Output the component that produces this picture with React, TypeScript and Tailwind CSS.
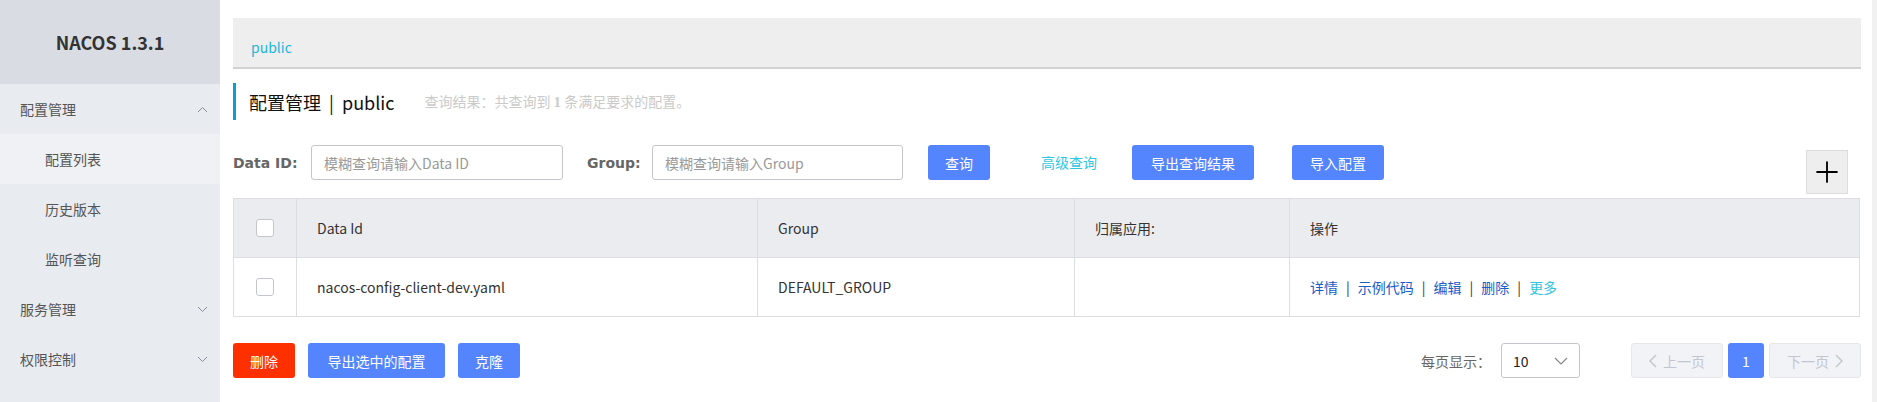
import { Plus } from 'lucide-react';

const MENU = [
  { label: '配置管理', level: 0, open: true },
  { label: '配置列表', level: 1, active: true },
  { label: '历史版本', level: 1 },
  { label: '监听查询', level: 1 },
  { label: '服务管理', level: 0, open: false },
  { label: '权限控制', level: 0, open: false },
];

const ACTIONS = ['详情', '示例代码', '编辑', '删除'];

function Chevron({ up }: { up?: boolean }) {
  return (
    <svg width="11" height="7" viewBox="0 0 11 7" className="text-[#8a8e99]">
      <polyline
        points={up ? '1,6 5.5,1.5 10,6' : '1,1 5.5,5.5 10,1'}
        fill="none"
        stroke="currentColor"
        strokeWidth="1"
      />
    </svg>
  );
}

function Checkbox() {
  return <span className="block h-[18px] w-[18px] rounded-[3px] border border-[#c4c6cf] bg-white" />;
}

function Sidebar() {
  return (
    <aside className="w-[220px] shrink-0 bg-[#e8ebf0]">
      <div className="flex h-[84px] items-center justify-center bg-[#d9dde3] text-[18px] font-bold text-[#333]">
        NACOS 1.3.1
      </div>
      {MENU.map((m) => (
        <div
          key={m.label}
          className={`flex h-[50px] items-center justify-between pr-[12px] text-[14px] text-[#555] ${
            m.level === 1 ? 'pl-[45px]' : 'pl-[20px]'
          } ${m.active ? 'bg-[#eff1f4]' : ''}`}
        >
          <span>{m.label}</span>
          {m.level === 0 && <Chevron up={m.open} />}
        </div>
      ))}
    </aside>
  );
}

export default function App() {
  return (
    <div className="flex h-[402px] w-[1877px] overflow-hidden bg-white font-['Noto_Sans_CJK_SC',sans-serif] text-[14px] leading-[20px] text-[#333]">
      <Sidebar />

      <main className="min-w-0 flex-1 pl-[13px] pr-[11px] pt-[18px]">
        {/* namespace bar */}
        <div className="h-[51px] border-b-2 border-[#d2d2d2] bg-[#eeeeee] pl-[18px] pt-[19px] text-[14px] text-[#1fb4d8]">
          public
        </div>

        {/* title */}
        <div className="mt-[14px] flex h-[37px] items-center border-l-[3px] border-[#0a9fd2] pl-[13px]">
          <span className="text-[18px] text-[#111]">配置管理&nbsp;&nbsp;|&nbsp;&nbsp;public</span>
          <span className="ml-[30px] text-[14px] text-[#cacaca]">
            查询结果：共查询到 <b className="font-['Liberation_Serif',serif] text-[15px]">1</b> 条满足要求的配置。
          </span>
        </div>

        {/* search row */}
        <div className="mt-[25px] flex items-start">
          <label className="flex h-[35px] w-[78px] items-center font-['DejaVu_Sans',sans-serif] text-[14px] font-bold text-[#666]">
            Data ID:
          </label>
          <div className="flex h-[35px] w-[252px] items-center rounded-[3px] border border-[#c4c6cf] pl-[12px] text-[#999]">
            模糊查询请输入Data ID
          </div>
          <label className="ml-[24px] flex h-[35px] w-[65px] items-center font-['DejaVu_Sans',sans-serif] text-[14px] font-bold text-[#666]">
            Group:
          </label>
          <div className="flex h-[35px] w-[251px] items-center rounded-[3px] border border-[#c4c6cf] pl-[12px] text-[#999]">
            模糊查询请输入Group
          </div>
          <button className="ml-[25px] h-[35px] w-[62px] rounded-[3px] bg-[#5584ff] text-white">查询</button>
          <span className="ml-[51px] w-[59px] leading-[35px] text-[#33c4e0]">高级查询</span>
          <button className="ml-[32px] h-[35px] w-[122px] rounded-[3px] bg-[#5584ff] text-white">导出查询结果</button>
          <button className="ml-[38px] h-[35px] w-[92px] rounded-[3px] bg-[#5584ff] text-white">导入配置</button>
          <div className="ml-auto mr-[13px] mt-[5px] flex h-[44px] w-[42px] items-center justify-center border border-[#dcdcdc] bg-[#eeeeee]">
            <Plus size={34} strokeWidth={1.3} className="text-black" />
          </div>
        </div>

        {/* table */}
        <table className="mt-[4px] w-[1627px] table-fixed border-collapse border border-[#dcdee3] text-left">
          <colgroup>
            <col className="w-[63px]" />
            <col className="w-[461px]" />
            <col className="w-[317px]" />
            <col className="w-[215px]" />
            <col />
          </colgroup>
          <thead>
            <tr className="h-[59px] bg-[#ebecf0]">
              <th className="border border-[#dcdee3] font-normal">
                <div className="flex justify-center"><Checkbox /></div>
              </th>
              <th className="border border-[#dcdee3] pl-[20px] font-normal">Data Id</th>
              <th className="border border-[#dcdee3] pl-[20px] font-normal">Group</th>
              <th className="border border-[#dcdee3] pl-[20px] font-normal">归属应用:</th>
              <th className="border border-[#dcdee3] pl-[20px] font-normal">操作</th>
            </tr>
          </thead>
          <tbody>
            <tr className="h-[59px]">
              <td className="border border-[#dcdee3]">
                <div className="flex justify-center"><Checkbox /></div>
              </td>
              <td className="border border-[#dcdee3] pl-[20px]">nacos-config-client-dev.yaml</td>
              <td className="border border-[#dcdee3] pl-[20px]">DEFAULT_GROUP</td>
              <td className="border border-[#dcdee3] pl-[20px]" />
              <td className="border border-[#dcdee3] pl-[20px]">
                {ACTIONS.map((a) => (
                  <span key={a}>
                    <span className="text-[#1a5cc8]">{a}</span>
                    <span className="mx-[8px] text-[#333]">|</span>
                  </span>
                ))}
                <span className="text-[#33c4e0]">更多</span>
              </td>
            </tr>
          </tbody>
        </table>

        {/* footer */}
        <div className="mt-[26px] flex items-center">
          <button className="h-[35px] w-[62px] rounded-[3px] bg-[#ff3000] text-white">删除</button>
          <button className="ml-[13px] h-[35px] w-[137px] rounded-[3px] bg-[#5584ff] text-white">导出选中的配置</button>
          <button className="ml-[13px] h-[35px] w-[62px] rounded-[3px] bg-[#5584ff] text-white">克隆</button>

          <div className="ml-auto flex items-center">
            <span className="w-[80px] text-[#666]">每页显示：</span>
            <div className="flex h-[35px] w-[79px] items-center justify-between rounded-[3px] border border-[#c4c6cf] pl-[11px] pr-[11px] text-[#222]">
              <span>10</span>
              <svg width="14" height="8" viewBox="0 0 14 8" className="text-[#888]">
                <polyline points="1,1 7,7 13,1" fill="none" stroke="currentColor" strokeWidth="1.2" />
              </svg>
            </div>
            <div className="ml-[51px] flex h-[35px] w-[92px] items-center justify-center gap-[6px] rounded-[3px] border border-[#e6e7eb] bg-[#f2f3f7] text-[#c4c6cf]">
              <svg width="8" height="14" viewBox="0 0 8 14">
                <polyline points="7,1 1,7 7,13" fill="none" stroke="currentColor" strokeWidth="1.5" />
              </svg>
              上一页
            </div>
            <div className="ml-[5px] flex h-[35px] w-[36px] items-center justify-center rounded-[3px] bg-[#5584ff] text-white">1</div>
            <div className="ml-[5px] flex h-[35px] w-[92px] items-center justify-center gap-[6px] rounded-[3px] border border-[#e6e7eb] bg-[#f2f3f7] text-[#c4c6cf]">
              下一页
              <svg width="8" height="14" viewBox="0 0 8 14">
                <polyline points="1,1 7,7 1,13" fill="none" stroke="currentColor" strokeWidth="1.5" />
              </svg>
            </div>
          </div>
        </div>
      </main>

      <div className="w-[5px] shrink-0 bg-[#f1f1f1]" />
    </div>
  );
}
